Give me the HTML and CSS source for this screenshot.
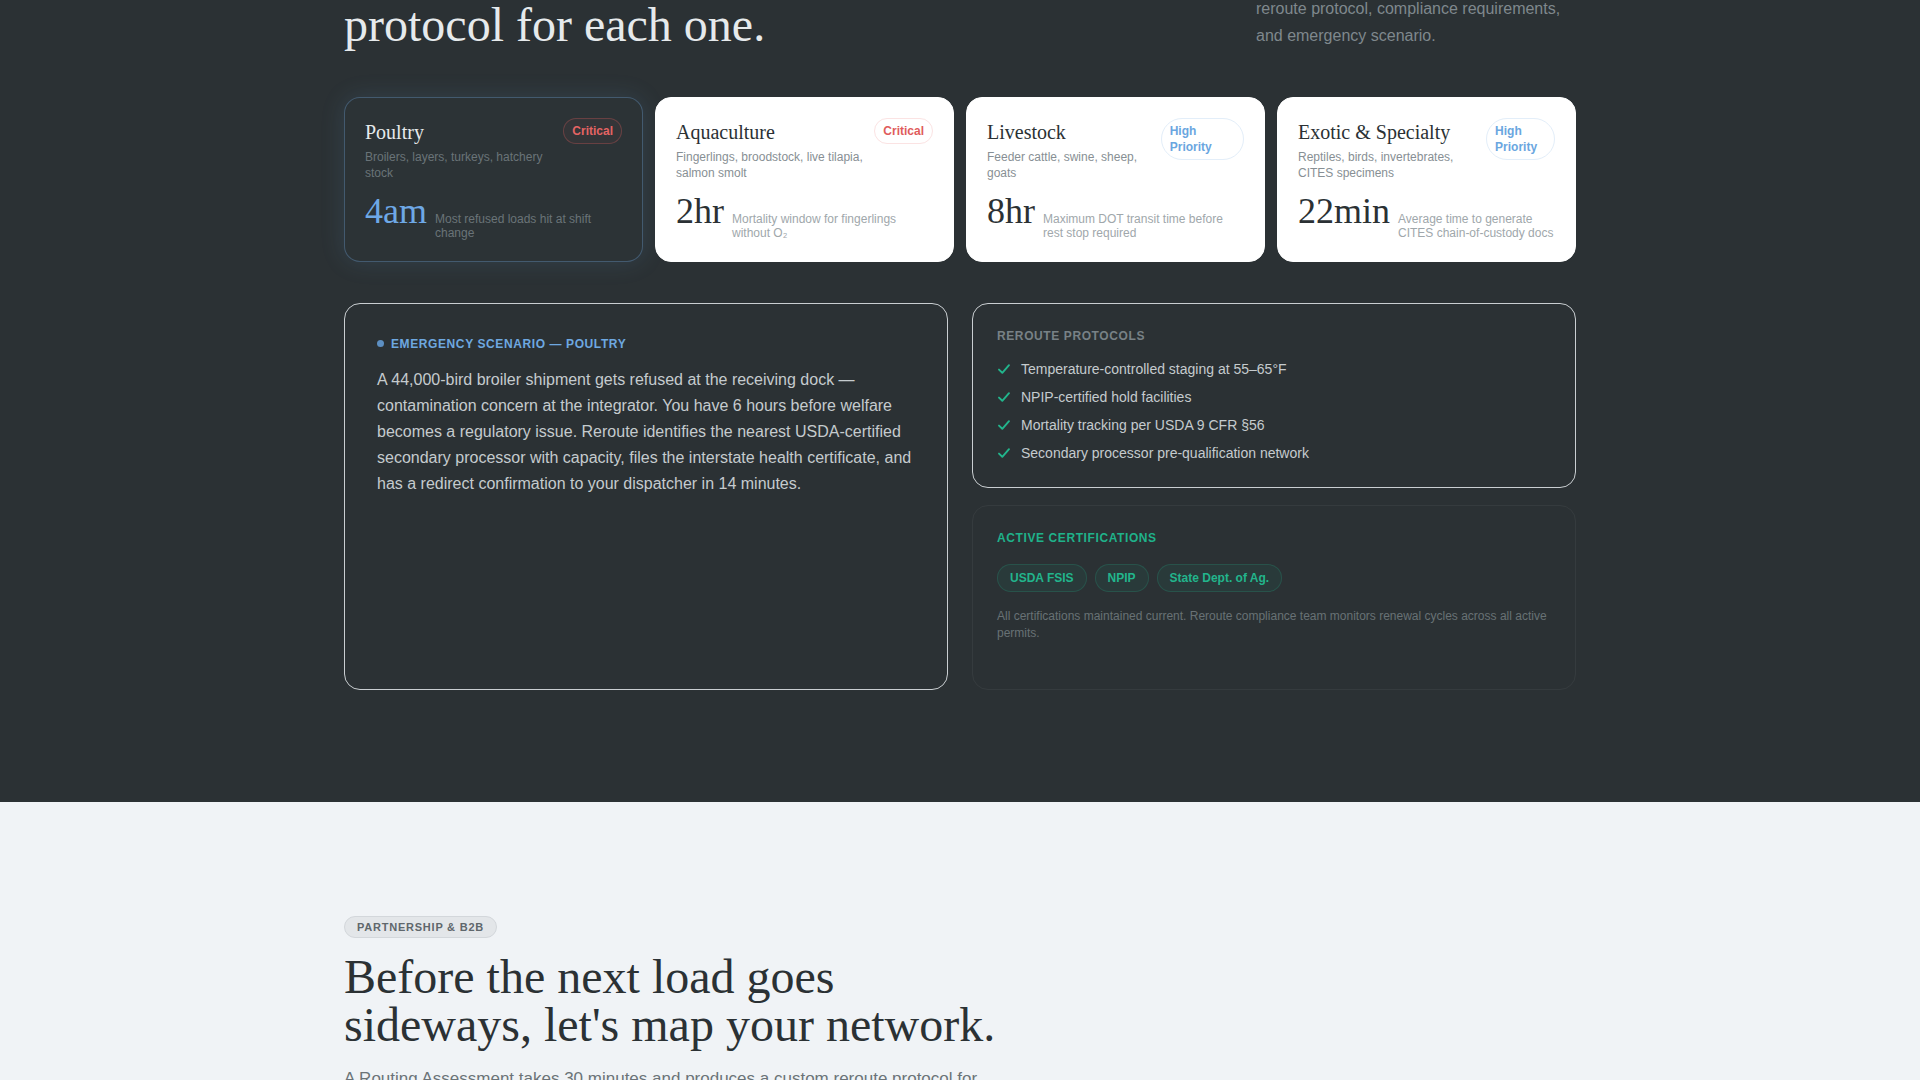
FILE: index.html
```html
<!DOCTYPE html>
<html lang="en">
<head>
<meta charset="utf-8">
<title>Reroute — Protocols</title>
<link rel="stylesheet" href="styles.css">
</head>
<body>
<section class="dark">
  <div class="container">
    <header class="sec-head">
      <h2 class="sec-title">protocol for each one.</h2>
      <p class="sec-lede">reroute protocol, compliance requirements, and emergency scenario.</p>
    </header>

    <div class="cards">
      <article class="card active">
        <div class="card-head">
          <div class="card-info">
            <h3 class="card-name">Poultry</h3>
            <p class="card-sub">Broilers, layers, turkeys, hatchery stock</p>
          </div>
          <span class="badge critical">Critical</span>
        </div>
        <div class="card-stat">
          <span class="stat-num">4am</span>
          <span class="stat-desc">Most refused loads hit at shift change</span>
        </div>
      </article>

      <article class="card">
        <div class="card-head">
          <div class="card-info">
            <h3 class="card-name">Aquaculture</h3>
            <p class="card-sub">Fingerlings, broodstock, live tilapia, salmon smolt</p>
          </div>
          <span class="badge critical">Critical</span>
        </div>
        <div class="card-stat">
          <span class="stat-num">2hr</span>
          <span class="stat-desc">Mortality window for fingerlings without O₂</span>
        </div>
      </article>

      <article class="card">
        <div class="card-head">
          <div class="card-info">
            <h3 class="card-name">Livestock</h3>
            <p class="card-sub">Feeder cattle, swine, sheep, goats</p>
          </div>
          <span class="badge high">High Priority</span>
        </div>
        <div class="card-stat">
          <span class="stat-num">8hr</span>
          <span class="stat-desc">Maximum DOT transit time before rest stop required</span>
        </div>
      </article>

      <article class="card">
        <div class="card-head">
          <div class="card-info">
            <h3 class="card-name">Exotic &amp; Specialty</h3>
            <p class="card-sub">Reptiles, birds, invertebrates, CITES specimens</p>
          </div>
          <span class="badge high">High Priority</span>
        </div>
        <div class="card-stat">
          <span class="stat-num">22min</span>
          <span class="stat-desc">Average time to generate CITES chain-of-custody docs</span>
        </div>
      </article>
    </div>

    <div class="detail">
      <div class="panel scenario">
        <p class="label"><span class="dot"></span>Emergency Scenario — Poultry</p>
        <p class="scenario-text">A 44,000-bird broiler shipment gets refused at the receiving dock — contamination concern at the integrator. You have 6 hours before welfare becomes a regulatory issue. Reroute identifies the nearest USDA-certified secondary processor with capacity, files the interstate health certificate, and has a redirect confirmation to your dispatcher in 14 minutes.</p>
      </div>

      <div class="panel protocols">
        <p class="label">Reroute Protocols</p>
        <ul class="checklist">
          <li><svg class="check" viewBox="0 0 14 14"><path d="M2 7.6 L5.3 10.8 L12 3.2"/></svg>Temperature-controlled staging at 55–65°F</li>
          <li><svg class="check" viewBox="0 0 14 14"><path d="M2 7.6 L5.3 10.8 L12 3.2"/></svg>NPIP-certified hold facilities</li>
          <li><svg class="check" viewBox="0 0 14 14"><path d="M2 7.6 L5.3 10.8 L12 3.2"/></svg>Mortality tracking per USDA 9 CFR §56</li>
          <li><svg class="check" viewBox="0 0 14 14"><path d="M2 7.6 L5.3 10.8 L12 3.2"/></svg>Secondary processor pre-qualification network</li>
        </ul>
      </div>

      <div class="panel certs">
        <p class="label">Active Certifications</p>
        <div class="chips">
          <span class="chip">USDA FSIS</span>
          <span class="chip">NPIP</span>
          <span class="chip">State Dept. of Ag.</span>
        </div>
        <p class="certs-note">All certifications maintained current. Reroute compliance team monitors renewal cycles across all active permits.</p>
      </div>
    </div>
  </div>
</section>

<section class="light">
  <div class="container">
    <span class="pill">Partnership &amp; B2B</span>
    <h2 class="cta-title">Before the next load goes sideways, let's map your network.</h2>
    <p class="cta-lede">A Routing Assessment takes 30 minutes and produces a custom reroute protocol for every load type you move.</p>
  </div>
</section>
</body>
</html>
```

FILE: styles.css
```css
html, body {
  margin: 0;
  padding: 0;
}

body {
  background: #2b3134;
  font-family: "Liberation Sans", Arial, sans-serif;
  color: #c5cbce;
}

.container {
  width: 1232px;
  margin: 0 auto;
}

/* ---------- dark section ---------- */
.dark {
  background: #2b3134;
  padding: 0 0 112px;
}

.sec-head {
  display: flex;
  justify-content: space-between;
  align-items: flex-end;
  margin-top: -5px;
}

.sec-title {
  margin: 0;
  font-family: "Liberation Serif", "Times New Roman", serif;
  font-weight: 400;
  font-size: 48px;
  line-height: 1;
  color: #e6eaec;
}

.sec-lede {
  margin: 0;
  max-width: 320px;
  font-size: 16px;
  line-height: 1.7;
  color: #7f888d;
}

/* cards */
.cards {
  display: grid;
  grid-template-columns: repeat(4, 1fr);
  gap: 12px;
  margin-top: 48px;
}

.card {
  background: #ffffff;
  border: 1px solid #ffffff;
  border-radius: 16px;
  padding: 20px;
}

.card.active {
  background: #2c3336;
  border-color: rgba(110, 168, 224, 0.34);
  box-shadow: 0 0 24px rgba(110, 168, 224, 0.15);
}

.card-head {
  display: flex;
  justify-content: space-between;
  align-items: flex-start;
  gap: 8px;
}

.card-info {
  flex: 0 1 auto;
  min-width: 0;
}

.card-name {
  margin: 0;
  font-family: "Liberation Serif", "Times New Roman", serif;
  font-weight: 400;
  font-size: 20px;
  line-height: 28px;
  color: #2b3134;
}

.active .card-name {
  color: #e6eaec;
}

.card-sub {
  margin: 2.5px 0 0;
  font-size: 12px;
  line-height: 16px;
  color: #878f94;
}

.active .card-sub {
  color: #6a7378;
}

.badge {
  flex: 0 1 auto;
  padding: 4px 8px;
  border: 1px solid;
  border-radius: 999px;
  font-size: 12px;
  line-height: 16px;
  font-weight: 700;
}

.badge.critical {
  color: #e05c5c;
  border-color: #fbe3e3;
}

.active .badge.critical {
  color: #e46464;
  border-color: rgba(224, 92, 92, 0.3);
  background: rgba(224, 92, 92, 0.05);
}

.badge.high {
  color: #6aa6e0;
  border-color: #e3eef9;
}

.card-stat {
  display: flex;
  align-items: baseline;
  gap: 8px;
  margin-top: 12px;
}

.stat-num {
  font-family: "Liberation Serif", "Times New Roman", serif;
  font-size: 36px;
  line-height: 1;
  color: #2b3134;
  white-space: nowrap;
}

.active .stat-num {
  color: #6ea8e6;
}

.stat-desc {
  font-size: 12px;
  line-height: 1.2;
  color: #a0a7ab;
}

.active .stat-desc {
  color: #6a7378;
}

/* detail panels */
.detail {
  display: grid;
  grid-template-columns: 1fr 1fr;
  grid-template-rows: 1fr 1fr;
  column-gap: 24px;
  row-gap: 17px;
  margin-top: 41px;
}

.panel {
  border-radius: 16px;
}

.label {
  margin: 0;
  font-size: 12px;
  line-height: 1.2;
  font-weight: 700;
  letter-spacing: 0.05em;
  text-transform: uppercase;
}

.scenario {
  grid-row: 1 / span 2;
  border: 1px solid #c9ced1;
  padding: 33px 32px 32px;
}

.scenario .label {
  display: flex;
  align-items: center;
  gap: 7px;
  color: #6ea8e0;
}

.dot {
  width: 7px;
  height: 7px;
  border-radius: 50%;
  background: #5d8fc2;
}

.scenario-text {
  margin: 16px 0 0;
  font-size: 16px;
  line-height: 1.62;
  color: #c5cbce;
}

.protocols {
  border: 1px solid #c9ced1;
  padding: 25px 24px 24px;
}

.protocols .label {
  color: #788186;
}

.checklist {
  list-style: none;
  margin: 16px 0 0;
  padding: 0;
  display: flex;
  flex-direction: column;
  gap: 8px;
}

.checklist li {
  display: flex;
  align-items: center;
  gap: 10px;
  font-size: 14px;
  line-height: 20px;
  color: #c5cbce;
}

.check {
  width: 14px;
  height: 14px;
  flex: none;
}

.check path {
  fill: none;
  stroke: #22b58c;
  stroke-width: 1.9;
  stroke-linecap: round;
  stroke-linejoin: round;
}

.certs {
  border: 1px solid rgba(255, 255, 255, 0.05);
  padding: 25px 24px 24px;
}

.certs .label {
  color: #1fb28a;
}

.chips {
  display: flex;
  flex-wrap: wrap;
  gap: 8px;
  margin-top: 19px;
}

.chip {
  padding: 6px 12px;
  border: 1px solid rgba(34, 181, 140, 0.2);
  border-radius: 999px;
  background: rgba(34, 181, 140, 0.07);
  font-size: 12px;
  line-height: 14px;
  font-weight: 700;
  color: #22b58c;
}

.certs-note {
  margin: 16px 0 0;
  font-size: 12px;
  line-height: 1.35;
  color: #687175;
}

/* ---------- light section ---------- */
.light {
  background: #f0f3f6;
  padding: 114px 0 120px;
}

.pill {
  display: block;
  width: fit-content;
  padding: 2px 12px;
  border: 1px solid #d3d7db;
  border-radius: 999px;
  background: #e3e6e9;
  font-size: 11px;
  line-height: 16px;
  font-weight: 700;
  letter-spacing: 0.07em;
  text-transform: uppercase;
  color: #5f676c;
}

.cta-title {
  margin: 15px 0 0;
  max-width: 680px;
  font-family: "Liberation Serif", "Times New Roman", serif;
  font-weight: 400;
  font-size: 48px;
  line-height: 1;
  color: #2b3134;
}

.cta-lede {
  margin: 16px 0 0;
  max-width: 660px;
  font-size: 17px;
  line-height: 1.6;
  color: #6b7378;
}
```
